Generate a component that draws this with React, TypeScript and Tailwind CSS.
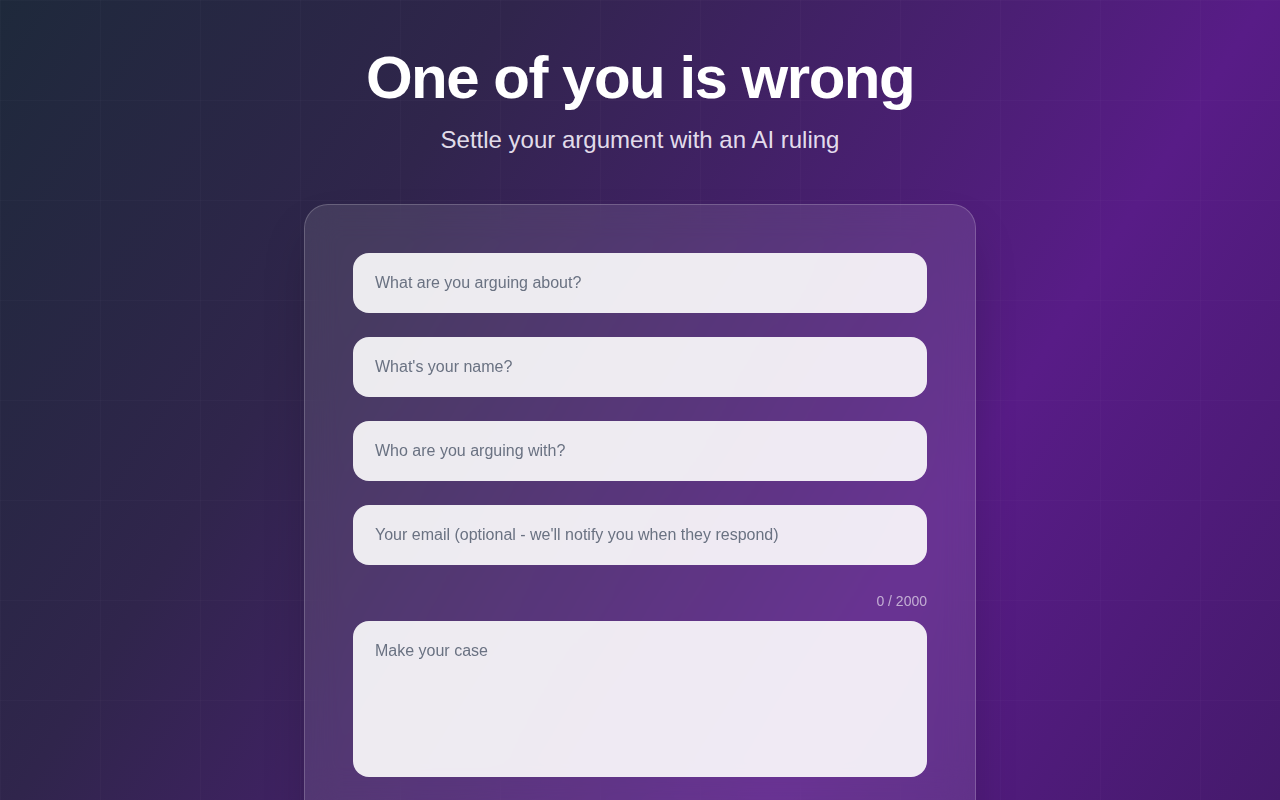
const fields = [
  'What are you arguing about?',
  "What's your name?",
  'Who are you arguing with?',
  "Your email (optional - we'll notify you when they respond)",
];

export default function App() {
  return (
    <div className="relative min-h-screen bg-[linear-gradient(122deg,#1e293b_0%,#30254c_29%,#581c87_71%,#451a6c_100%)] bg-fixed font-['Liberation_Sans',Arial,sans-serif]">
      <div className="pointer-events-none absolute inset-0 bg-[linear-gradient(rgba(255,255,255,0.018)_1px,transparent_1px),linear-gradient(90deg,rgba(255,255,255,0.018)_1px,transparent_1px)] bg-[size:100px_100px]" />
      <main className="relative flex flex-col items-center px-4 pt-12 pb-16">
        <h1 className="text-[60px] font-bold leading-none tracking-tight text-white">One of you is wrong</h1>
        <p className="mt-4 text-2xl text-purple-50/90">Settle your argument with an AI ruling</p>

        <form className="mt-12 w-full max-w-[672px] rounded-3xl border border-white/20 bg-white/10 p-12 shadow-2xl backdrop-blur-lg">
          <div className="flex flex-col gap-6">
            {fields.map((f) => (
              <input
                key={f}
                type="text"
                placeholder={f}
                className="h-[60px] w-full rounded-2xl border-0 bg-white/90 px-[22px] text-base text-gray-900 placeholder:text-gray-500 outline-none"
              />
            ))}
          </div>

          <div className="mt-[26px] mb-[10px] text-right text-sm leading-5 text-white/60">0 / 2000</div>
          <textarea
            placeholder="Make your case"
            className="block h-[156px] w-full resize-none rounded-2xl border-0 bg-white/90 px-[22px] py-[18px] text-base text-gray-900 placeholder:text-gray-500 outline-none"
          />

          <button
            type="button"
            className="mt-6 h-14 w-full rounded-2xl bg-gradient-to-r from-purple-500 to-pink-500 text-lg font-semibold text-white"
          >
            Get the verdict
          </button>
        </form>
      </main>
    </div>
  );
}
